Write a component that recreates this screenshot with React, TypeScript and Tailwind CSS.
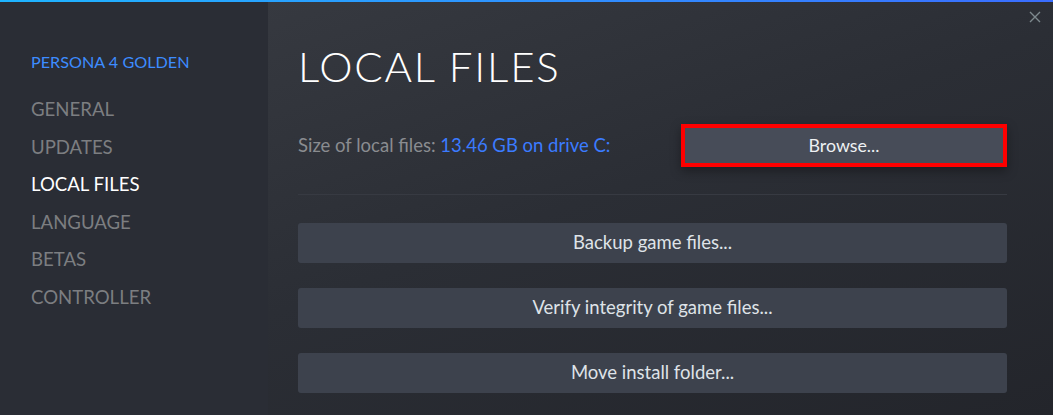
import React from "react";

const navItems = [
  { label: "GENERAL", active: false },
  { label: "UPDATES", active: false },
  { label: "LOCAL FILES", active: true },
  { label: "LANGUAGE", active: false },
  { label: "BETAS", active: false },
  { label: "CONTROLLER", active: false },
];

const actions = ["Backup game files...", "Verify integrity of game files...", "Move install folder..."];

export default function App() {
  return (
    <div
      className="relative flex h-[415px] w-[1053px] overflow-hidden bg-[#25272e]"
      style={{ fontFamily: "Lato, 'Noto Sans', sans-serif" }}
    >
      <div className="absolute left-0 right-0 top-0 h-[2px] bg-gradient-to-r from-[#1eb4ff] to-[#3a6dff]" />
      {/* Sidebar */}
      <div className="flex w-[268px] shrink-0 flex-col bg-[#2a2d35] pl-[31px] pt-[52px]">
        <div className="text-[16.2px] leading-[20px] text-[#3d8cff]">PERSONA 4 GOLDEN</div>
        <div className="mt-[19px] flex flex-col">
          {navItems.map((it) => (
            <div
              key={it.label}
              className={`h-[37.5px] text-[18.6px] leading-[37.5px] ${it.active ? "text-white" : "text-[#7c7e81]"}`}
            >
              {it.label}
            </div>
          ))}
        </div>
      </div>
      {/* Main */}
      <div className="flex flex-1 flex-col bg-[linear-gradient(160deg,#363940_0%,#2b2e35_45%,#23252b_100%)] pl-[30px] pr-[46px] pt-[38px]">
        <div className="text-[42px] font-light leading-[56px] tracking-[1.8px] text-white">LOCAL FILES</div>
        <div className="mt-[30px] flex items-center">
          <div className="flex-1 text-[18.5px] text-[#8a8c90]">
            Size of local files: <span className="text-[#3b7bff]">13.46 GB on drive C:</span>
          </div>
          <div className="border-[4px] border-[#ff0000] shadow-[0_4px_10px_rgba(0,0,0,0.35)]">
            <div className="flex h-[35px] w-[318px] items-center justify-center bg-[#474c58] text-[17.8px] text-[#eef1f3]">
              Browse...
            </div>
          </div>
        </div>
        <div className="mt-[27px] h-px bg-[#373a42]" />
        <div className="mt-[28px] flex flex-col gap-[25px]">
          {actions.map((a) => (
            <div
              key={a}
              className="flex h-[40px] items-center justify-center rounded-[3px] bg-[#3d424d] text-[18.5px] text-[#dfe3e8]"
            >
              {a}
            </div>
          ))}
        </div>
      </div>
      <svg className="absolute right-[12px] top-[11px]" width="12" height="12" viewBox="0 0 12 12">
        <path d="M1 1L11 11M11 1L1 11" stroke="#7d898e" strokeWidth="1.4" />
      </svg>
    </div>
  );
}
